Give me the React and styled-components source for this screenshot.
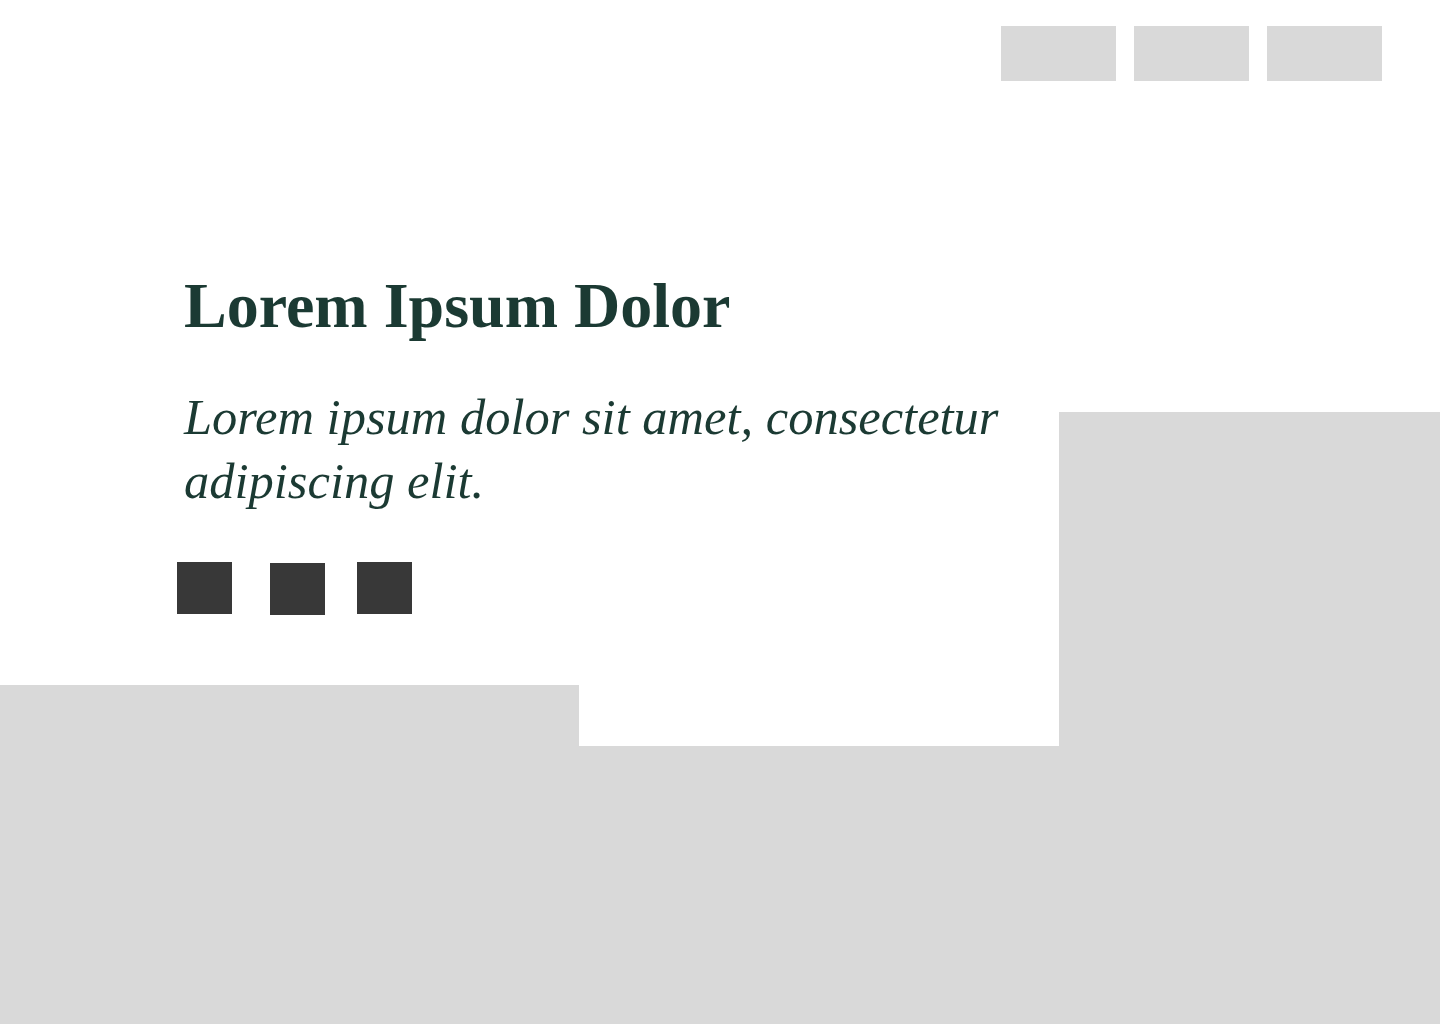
import React from "react";
import styled, { createGlobalStyle } from "styled-components";

const GlobalStyle = createGlobalStyle`
  html, body {
    margin: 0;
    padding: 0;
    background: #d9d9d9;
  }
  * { box-sizing: border-box; }
`;

const Page = styled.div`
  display: grid;
  grid-template-columns: 579px 480px 1fr;
  grid-template-rows: 412px 273px 61px 1fr;
  min-height: 100vh;
  width: 100%;
  background: #d9d9d9;
  font-family: "Liberation Serif", "Times New Roman", serif;
`;

const WhiteArea = styled.div`
  grid-row: ${(p) => p.$row};
  grid-column: ${(p) => p.$col};
  background: #ffffff;
`;

const Header = styled.header`
  grid-row: 1;
  grid-column: 1 / -1;
  align-self: start;
  z-index: 1;
  display: flex;
  justify-content: flex-end;
  gap: 18px;
  padding: 26px 58px 0 0;
`;

const NavItem = styled.div`
  width: 115px;
  height: 55px;
  background: #d9d9d9;
`;

const Hero = styled.section`
  grid-row: 1 / 4;
  grid-column: 1 / 3;
  z-index: 1;
  display: flex;
  flex-direction: column;
  align-items: flex-start;
  padding: 268px 0 0 177px;
`;

const Title = styled.h1`
  margin: 0 0 0 7px;
  font-family: "Liberation Serif", "Times New Roman", serif;
  font-weight: 700;
  font-size: 64px;
  line-height: 76px;
  color: #1b3a33;
`;

const Subtitle = styled.p`
  margin: 41px 0 0 7px;
  width: 860px;
  font-family: "Liberation Serif", "Times New Roman", serif;
  font-style: italic;
  font-weight: 400;
  font-size: 50.5px;
  line-height: 64px;
  color: #1b3a33;
`;

const SquareRow = styled.div`
  display: flex;
  align-items: flex-start;
  margin-top: 49px;
`;

const Square = styled.div`
  width: 55px;
  height: 52px;
  background: #383838;
  margin-left: ${(p) => p.$gap || 0}px;
  margin-top: ${(p) => p.$drop || 0}px;
`;

export default function App() {
  return (
    <>
      <GlobalStyle />
      <Page>
        <WhiteArea $row="1" $col="1 / -1" />
        <WhiteArea $row="2" $col="1 / 3" />
        <WhiteArea $row="3" $col="2" />
        <Header>
          <NavItem />
          <NavItem />
          <NavItem />
        </Header>
        <Hero>
          <Title>Lorem Ipsum Dolor</Title>
          <Subtitle>
            Lorem ipsum dolor sit amet, consectetur adipiscing elit.
          </Subtitle>
          <SquareRow>
            <Square />
            <Square $gap={38} $drop={1} />
            <Square $gap={32} />
          </SquareRow>
        </Hero>
      </Page>
    </>
  );
}
